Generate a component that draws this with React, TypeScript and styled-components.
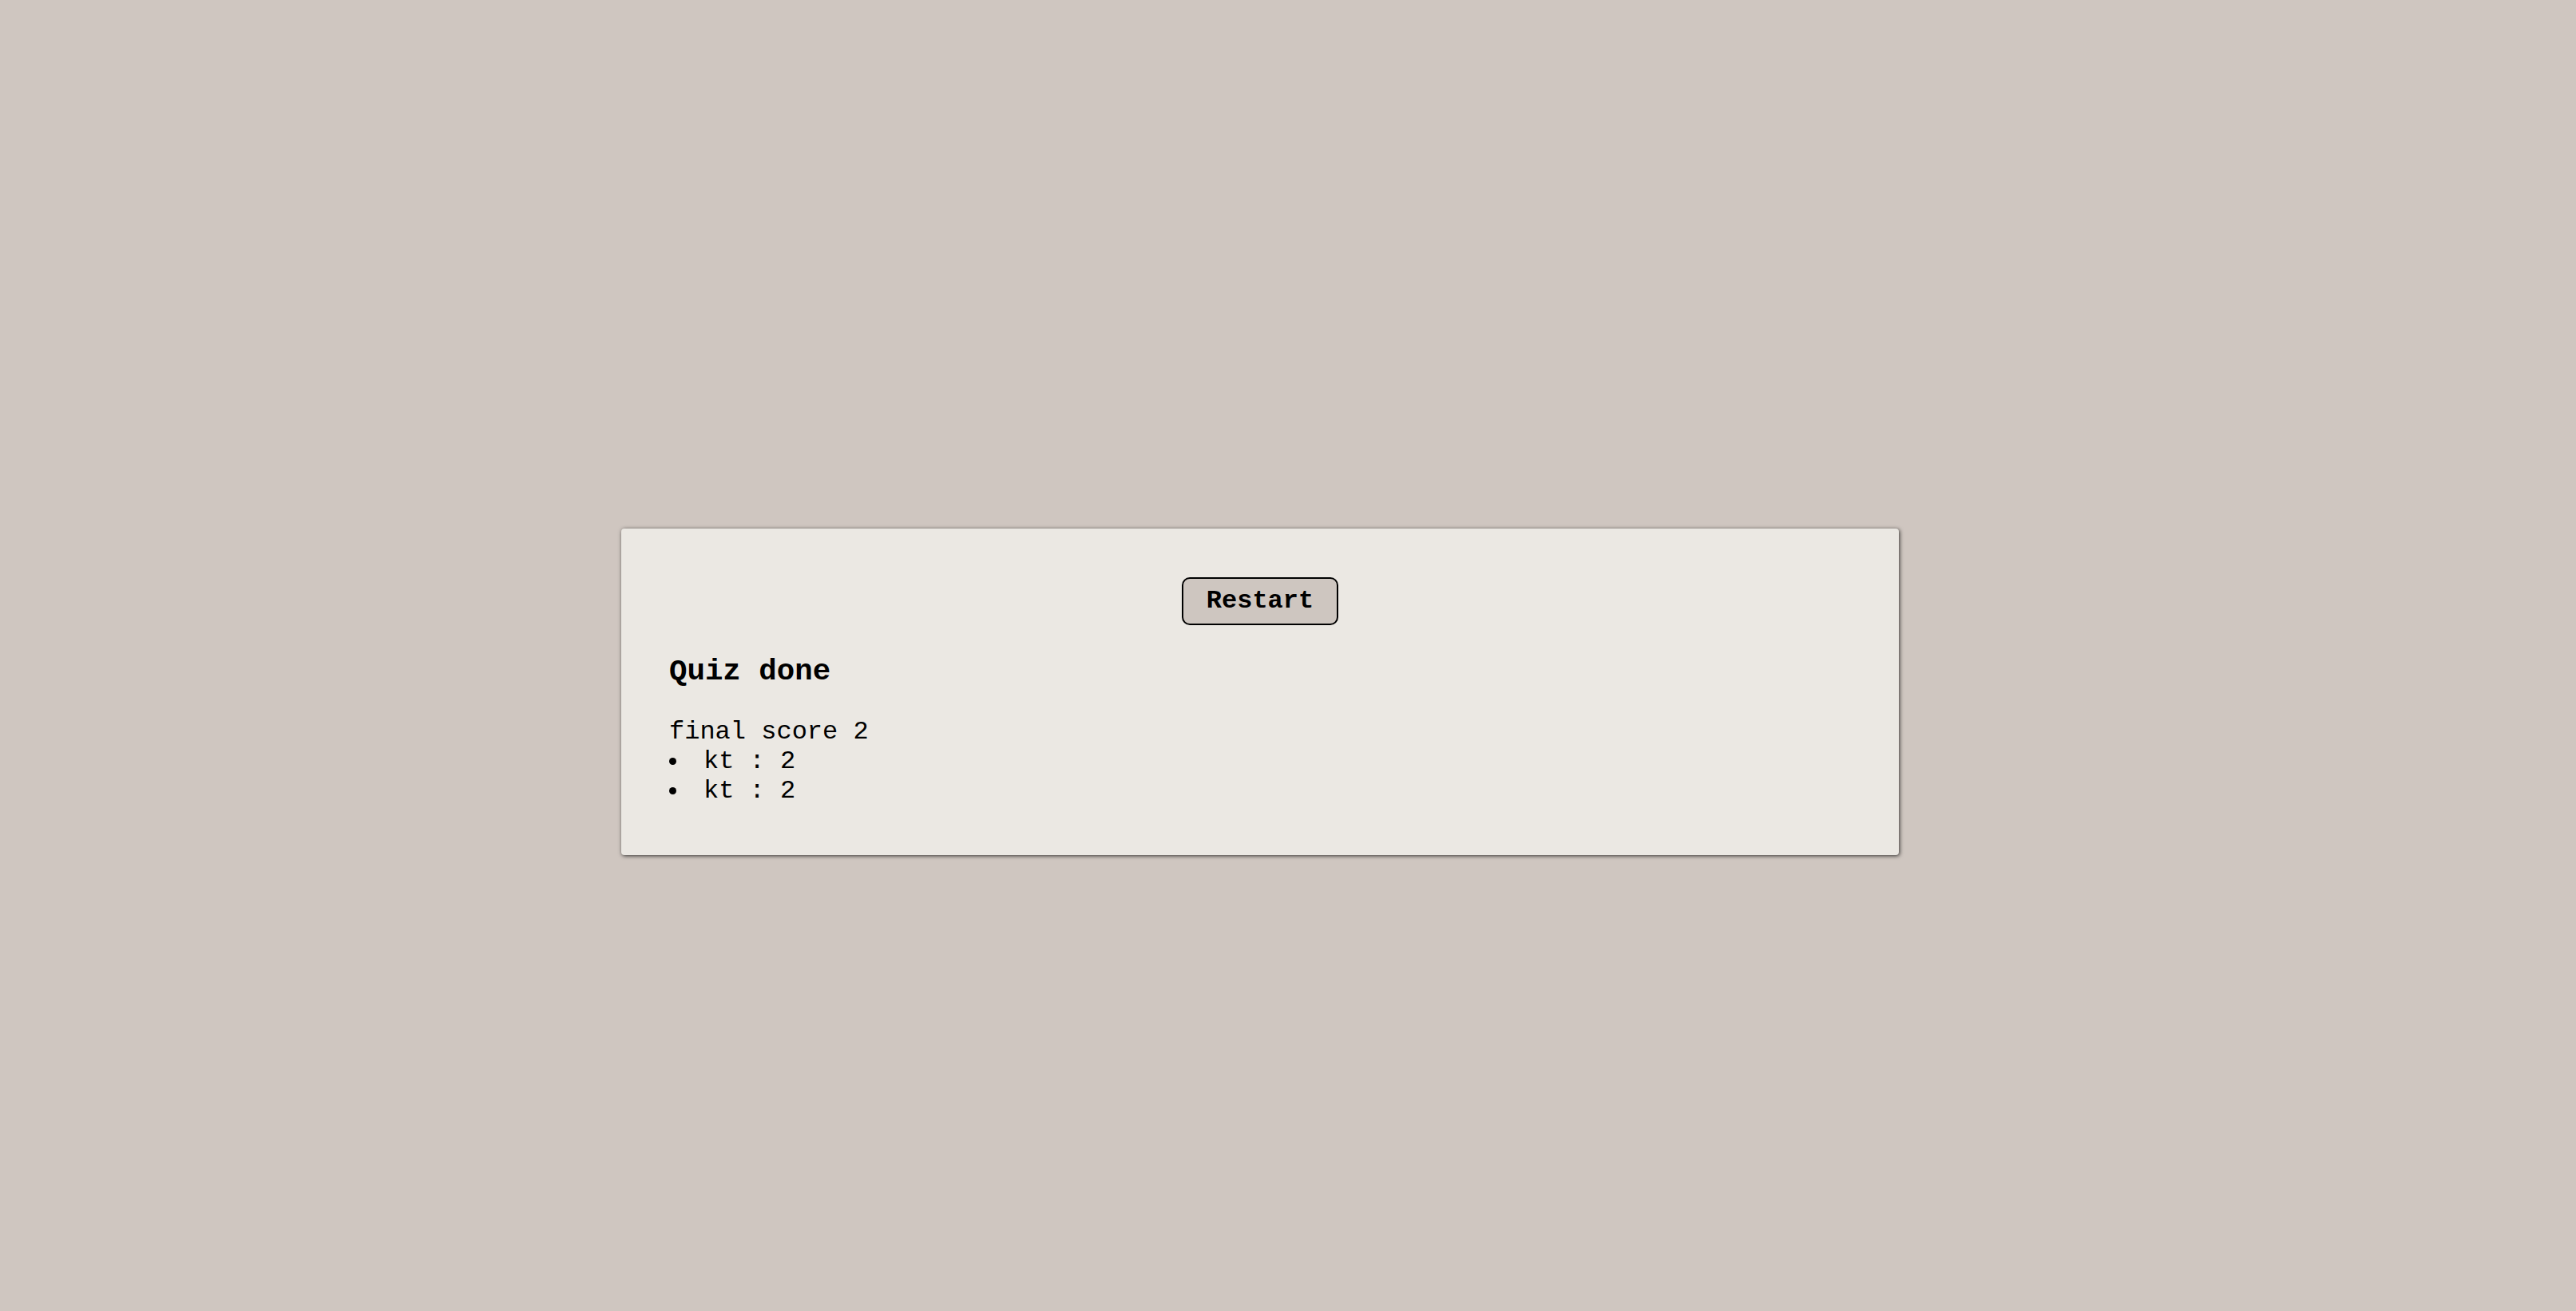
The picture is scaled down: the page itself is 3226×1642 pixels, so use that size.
import React from "react";
import styled, { createGlobalStyle } from "styled-components";

const GlobalStyle = createGlobalStyle`
  html, body {
    margin: 0;
    padding: 0;
    background: #cfc6c0;
  }
  body {
    font-family: "Liberation Mono", "Courier New", monospace;
    color: #000;
  }
`;

const Page = styled.main`
  box-sizing: border-box;
  min-height: 100vh;
  display: flex;
  justify-content: center;
  align-items: flex-start;
  padding: 662px 70px 0 0;
`;

const Card = styled.section`
  box-sizing: border-box;
  width: 1600px;
  padding: 61px 60px 62px;
  background: #ebe8e3;
  border-radius: 4px;
  box-shadow: 1px 1px 5px rgba(0, 0, 0, 0.75);
  font-size: 32px;
`;

const ButtonRow = styled.div`
  display: flex;
  justify-content: center;
`;

const RestartButton = styled.button`
  font-family: "Liberation Mono", "Courier New", monospace;
  font-size: 32px;
  font-weight: bold;
  line-height: 36px;
  color: #000;
  background: #cec6c0;
  border: 2px solid #000;
  border-radius: 10px;
  padding: 10px 29px;
  cursor: pointer;
`;

const Title = styled.h3`
  font-size: 37.44px;
  font-weight: bold;
  margin: 37px 0 36px;
  line-height: normal;
`;

const Score = styled.p`
  margin: 0;
  line-height: 37px;
`;

const Results = styled.ul`
  list-style: none;
  margin: 0;
  padding: 0;
`;

const ResultItem = styled.li`
  line-height: 37px;
  &::before {
    content: "";
    display: inline-block;
    width: 9px;
    height: 9px;
    border-radius: 50%;
    background: #000;
    vertical-align: 4px;
    margin-right: 34px;
  }
`;

const results = [
  { name: "kt", score: 2 },
  { name: "kt", score: 2 },
];

export default function App() {
  return (
    <>
      <GlobalStyle />
      <Page>
        <Card>
          <ButtonRow>
            <RestartButton>Restart</RestartButton>
          </ButtonRow>
          <Title>Quiz done</Title>
          <Score>final score 2</Score>
          <Results>
            {results.map((r, i) => (
              <ResultItem key={i}>
                {r.name} : {r.score}
              </ResultItem>
            ))}
          </Results>
        </Card>
      </Page>
    </>
  );
}
